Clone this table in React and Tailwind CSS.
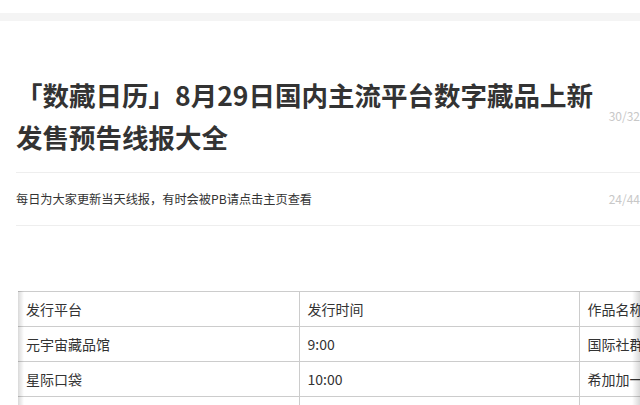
const ROWS = [
  ['发行平台', '发行时间', '作品名称'],
  ['元宇宙藏品馆', '9:00', '国际社群'],
  ['星际口袋', '10:00', '希加加一'],
  ['', '', ''],
]

export default function App() {
  return (
    <div
      className="h-[405px] w-[640px] overflow-hidden bg-white text-[#333]"
      style={{ fontFamily: '"Noto Sans CJK SC", "Noto Sans", sans-serif' }}
    >
      <div className="h-[13px]" />
      <div className="h-2 bg-[#f4f4f4]" />

      <div className="ml-4 mt-[53px] flex items-center border-b border-[#eeeeee] pb-[14px]">
        <h1 className="w-[585px] text-[26.5px] font-bold leading-[42px] text-[#333]">
          「数藏日历」8月29日国内主流平台数字藏品上新发售预告线报大全
        </h1>
        <span className="ml-auto text-[12px] text-[#c8c8c8]">30/32</span>
      </div>

      <div className="ml-4 flex h-[53px] items-center border-b border-[#eeeeee]">
        <p className="text-[12.2px] text-[#333]">每日为大家更新当天线报，有时会被PB请点击主页查看</p>
        <span className="ml-auto text-[12px] text-[#c8c8c8]">24/44</span>
      </div>

      <div className="relative ml-[18px] mt-[65px] overflow-hidden">
        <table className="w-[841px] table-fixed border-collapse text-[14px] text-[#333]">
          <colgroup>
            <col className="w-[281px]" />
            <col className="w-[280px]" />
            <col className="w-[280px]" />
          </colgroup>
          <tbody>
            {ROWS.map((row, i) => (
              <tr key={i} className="h-[35px] border-t border-[#cccccc]">
                {row.map((cell, j) => (
                  <td
                    key={j}
                    className={
                      j === 0
                        ? 'overflow-hidden whitespace-nowrap px-2 align-middle'
                        : 'overflow-hidden whitespace-nowrap border-l border-[#cccccc] px-2 align-middle'
                    }
                  >
                    {cell}
                  </td>
                ))}
              </tr>
            ))}
          </tbody>
        </table>
        <div className="pointer-events-none absolute inset-y-0 left-0 w-[6px] bg-gradient-to-r from-black/15 to-transparent" />
        <div className="pointer-events-none absolute inset-y-0 right-0 w-[8px] bg-gradient-to-l from-black/15 to-transparent" />
      </div>
    </div>
  )
}
